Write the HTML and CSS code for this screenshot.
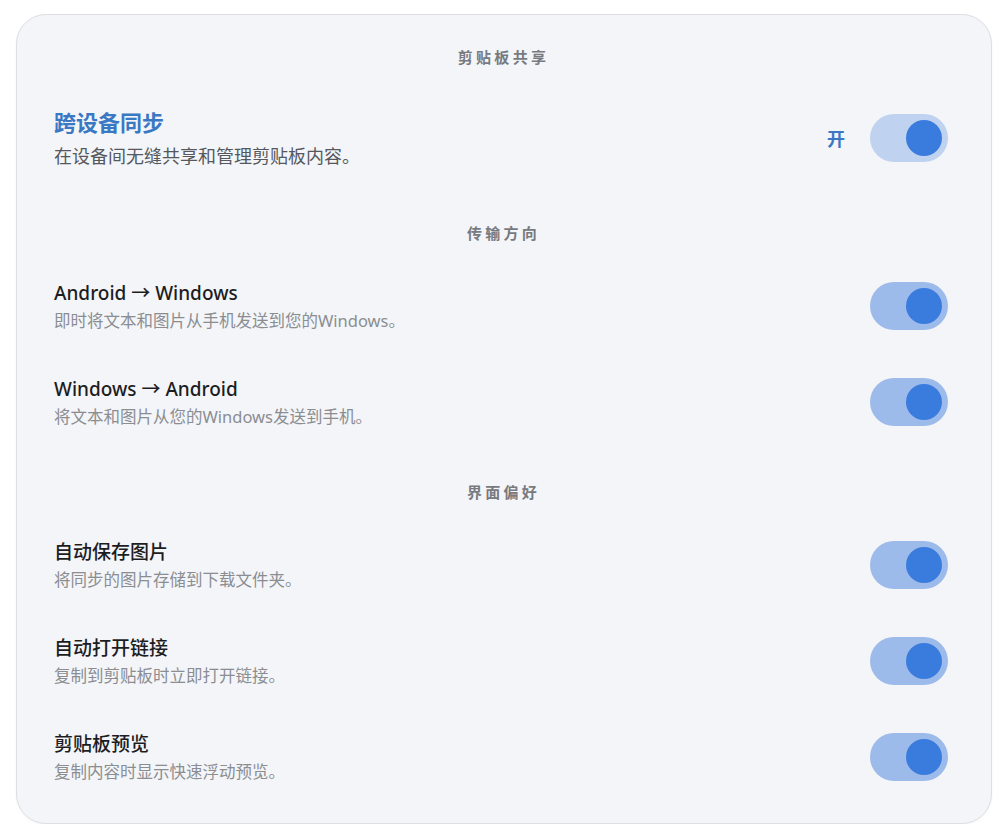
FILE: index.html
```html
<!DOCTYPE html>
<html lang="zh-CN">
<head>
<meta charset="utf-8">
<title>剪贴板共享</title>
<link rel="stylesheet" href="styles.css">
</head>
<body>
<div class="card">
  <section class="section">
    <h2 class="section-title">剪贴板共享</h2>
    <div class="row main-row">
      <div class="text">
        <div class="title main-title">跨设备同步</div>
        <div class="sub main-sub">在设备间无缝共享和管理剪贴板内容。</div>
      </div>
      <div class="control">
        <span class="state">开</span>
        <span class="toggle toggle-light"><span class="knob"></span></span>
      </div>
    </div>
  </section>

  <section class="section section-transfer">
    <h2 class="section-title">传输方向</h2>
    <div class="rows">
      <div class="row">
        <div class="text">
          <div class="title">Android → Windows</div>
          <div class="sub">即时将文本和图片从手机发送到您的Windows。</div>
        </div>
        <span class="toggle"><span class="knob"></span></span>
      </div>
      <div class="row">
        <div class="text">
          <div class="title">Windows → Android</div>
          <div class="sub">将文本和图片从您的Windows发送到手机。</div>
        </div>
        <span class="toggle"><span class="knob"></span></span>
      </div>
    </div>
  </section>

  <section class="section section-prefs">
    <h2 class="section-title">界面偏好</h2>
    <div class="rows">
      <div class="row">
        <div class="text">
          <div class="title">自动保存图片</div>
          <div class="sub">将同步的图片存储到下载文件夹。</div>
        </div>
        <span class="toggle"><span class="knob"></span></span>
      </div>
      <div class="row">
        <div class="text">
          <div class="title">自动打开链接</div>
          <div class="sub">复制到剪贴板时立即打开链接。</div>
        </div>
        <span class="toggle"><span class="knob"></span></span>
      </div>
      <div class="row">
        <div class="text">
          <div class="title">剪贴板预览</div>
          <div class="sub">复制内容时显示快速浮动预览。</div>
        </div>
        <span class="toggle"><span class="knob"></span></span>
      </div>
    </div>
  </section>
</div>
</body>
</html>
```

FILE: styles.css
```css
* {
  box-sizing: border-box;
}

html, body {
  margin: 0;
  padding: 0;
  background: #ffffff;
}

body {
  font-family: "Noto Sans", "Noto Sans CJK SC", sans-serif;
  padding: 14px 14px 0 16px;
}

.card {
  width: 976px;
  height: 810px;
  background: #f3f5f9;
  border: 1px solid #dcdee2;
  border-radius: 30px;
  padding: 32px 43px 0 37px;
  box-shadow: 0 1px 3px rgba(0, 0, 0, 0.04);
}

.section-transfer {
  margin-top: 54px;
}

.section-prefs {
  margin-top: 53px;
}

.section-title {
  margin: 0 0 37px;
  text-align: center;
  font-size: 15px;
  line-height: 20px;
  font-weight: 700;
  color: #777a80;
  letter-spacing: 3.3px;
  padding-left: 5px;
}

.section-title + .main-row {
  margin-top: 40px;
}

.rows {
  display: flex;
  flex-direction: column;
  gap: 43px;
}

.row {
  display: flex;
  align-items: center;
  justify-content: space-between;
}

.row > .toggle {
  margin-bottom: 2px;
}

.text {
  display: flex;
  flex-direction: column;
}

.title {
  font-size: 19px;
  line-height: 26px;
  font-weight: 500;
  color: #1d1d1f;
}

.sub {
  margin-top: 3px;
  font-size: 16.5px;
  line-height: 24px;
  color: #8b8d91;
}

.main-title {
  font-size: 22px;
  line-height: 30px;
  font-weight: 700;
  color: #3b78c3;
}

.main-sub {
  margin-top: 6px;
  font-size: 18px;
  line-height: 26px;
  color: #55585c;
}

.control {
  display: flex;
  align-items: center;
  gap: 25px;
}

.state {
  font-size: 18px;
  font-weight: 700;
  color: #3b78c3;
}

.toggle {
  width: 78px;
  height: 48px;
  border-radius: 24px;
  background: #9dbbea;
  display: flex;
  align-items: center;
  justify-content: flex-end;
  padding-right: 6px;
  flex-shrink: 0;
}

.toggle-light {
  background: #bfd2f0;
}

.knob {
  width: 36px;
  height: 36px;
  border-radius: 50%;
  background: #3a7cde;
}
```
